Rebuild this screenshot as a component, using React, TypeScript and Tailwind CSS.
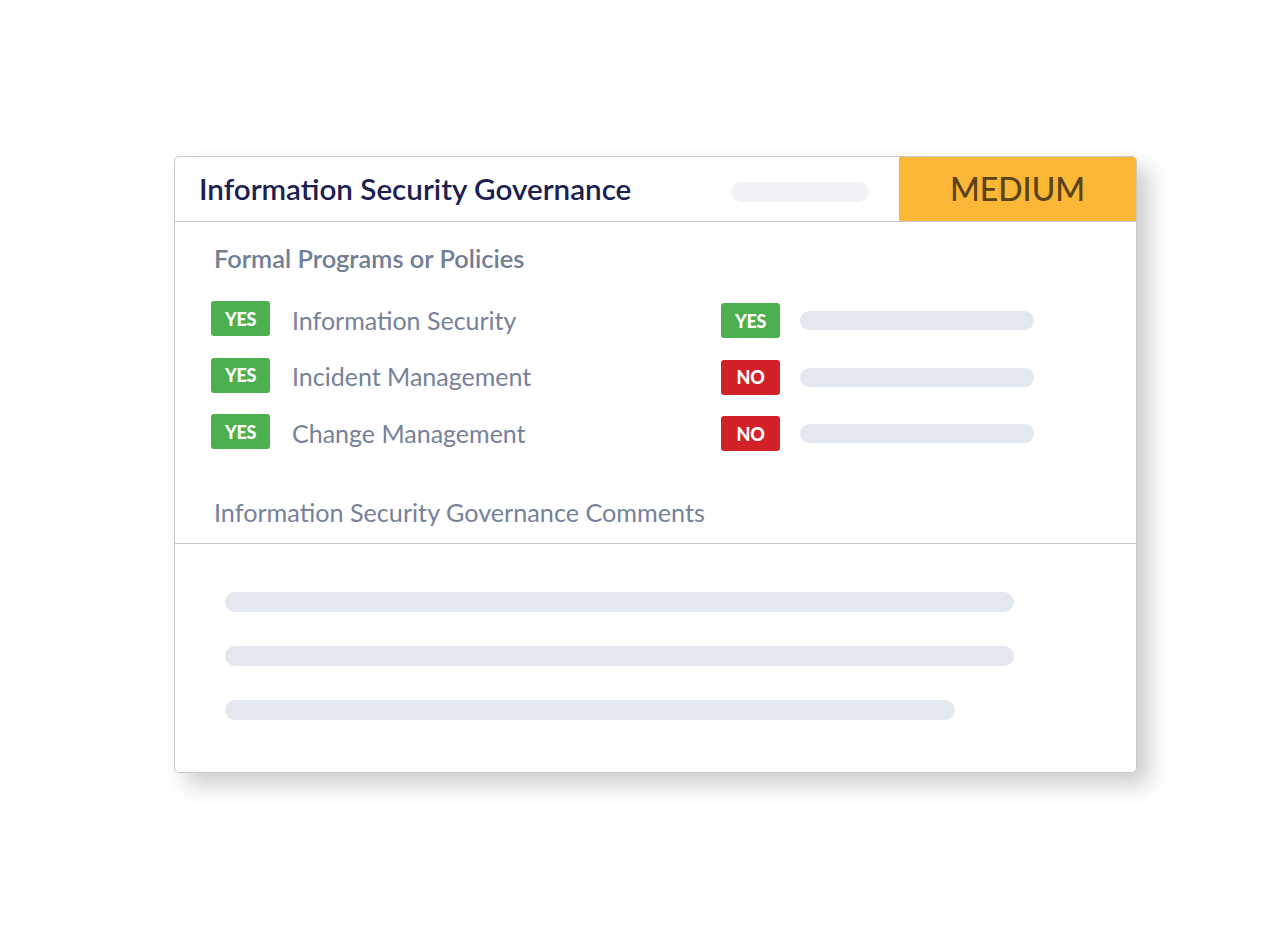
const rows = [
  { label: "Information Security", right: true },
  { label: "Incident Management", right: false },
  { label: "Change Management", right: false },
];

function Badge({ yes }: { yes: boolean }) {
  return (
    <div
      className={`flex h-[35px] w-[59px] items-center justify-center rounded-[3px] text-[18px] font-black leading-none tracking-[-0.3px] text-white ${
        yes ? "bg-[#4caf50]" : "bg-[#d32129]"
      }`}
    >
      {yes ? "YES" : "NO"}
    </div>
  );
}

export default function App() {
  return (
    <div
      className="h-[938px] w-[1275px] bg-white pl-[174px] pt-[156px]"
      style={{ fontFamily: "Lato, 'Noto Sans', sans-serif" }}
    >
      <div className="w-[963px] overflow-hidden rounded-[5px] border border-[#c6c9d4] bg-white shadow-[12px_12px_22px_rgba(0,0,0,0.2)]">
        {/* header */}
        <div className="flex h-[65px] items-center border-b border-[#c6c9d4]">
          <div className="flex-1 pl-[24px] text-[29.6px] font-semibold leading-[1.2] text-[#1c2050]">
            Information Security Governance
          </div>
          <div className="mr-[30px] mt-[5px] h-[20px] w-[138px] rounded-full bg-[#f0f2f5]" />
          <div className="flex h-full w-[237px] items-center justify-center bg-[#fdb736] text-[32px] font-medium leading-none text-[#5a4318]">
            MEDIUM
          </div>
        </div>

        {/* policies */}
        <div className="border-b border-[#c6c9d4] pb-[15px] pl-[36px] pt-[21px]">
          <div className="pl-[3px] text-[25.4px] font-semibold leading-[1.2] text-[#717e94]">
            Formal Programs or Policies
          </div>
          <div className="mt-[28px] flex flex-col gap-[19.5px]">
            {rows.map((r) => (
              <div key={r.label} className="flex items-start">
                <Badge yes />
                <div className="ml-[22px] mt-[1px] flex h-[35px] w-[429px] items-center text-[25px] leading-[1.2] text-[#76819a]">
                  {r.label}
                </div>
                <div className="mt-[2px] flex items-center">
                  <Badge yes={r.right} />
                  <div className="ml-[20px] h-[19px] w-[234px] rounded-full bg-[#e3e7ee]" />
                </div>
              </div>
            ))}
          </div>
          <div className="mt-[46px] pl-[3px] text-[25.2px] leading-[1.2] text-[#76819a]">
            Information Security Governance Comments
          </div>
        </div>

        {/* comments */}
        <div className="flex flex-col gap-[34px] pb-[52px] pl-[50px] pt-[48px]">
          <div className="h-[20px] w-[789px] rounded-full bg-[#e3e7ee]" />
          <div className="h-[20px] w-[789px] rounded-full bg-[#e3e7ee]" />
          <div className="h-[20px] w-[730px] rounded-full bg-[#e3e7ee]" />
        </div>
      </div>
    </div>
  );
}
